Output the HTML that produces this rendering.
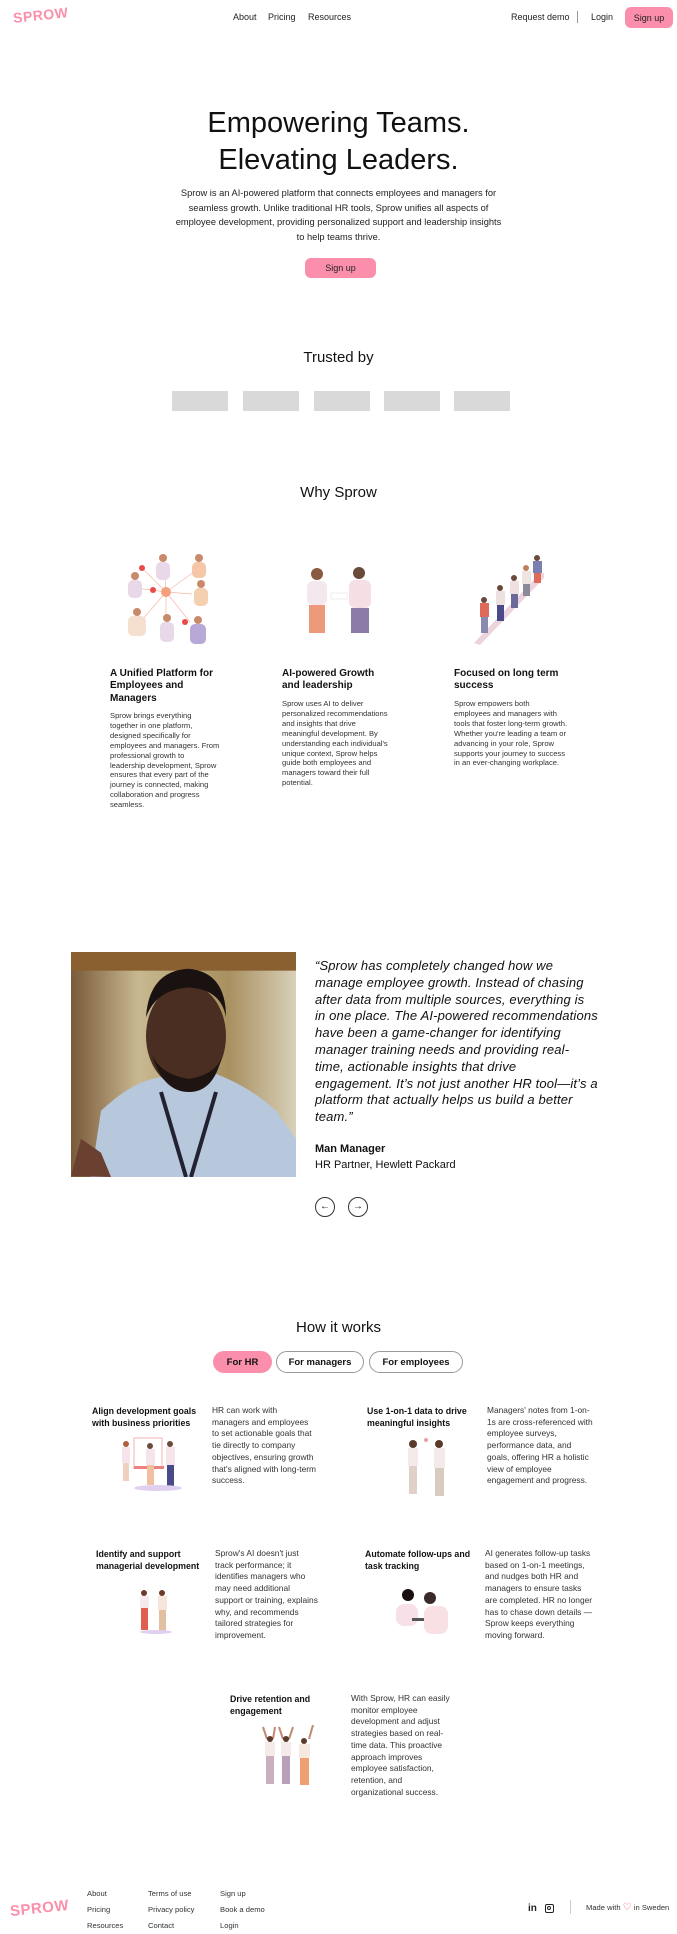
<!DOCTYPE html>
<html><head><meta charset="utf-8"><style>
*{margin:0;padding:0;box-sizing:border-box}
body{width:677px;height:1920px;position:relative;background:#fff;font-family:"Liberation Sans",Arial,sans-serif;color:#111;overflow:hidden}
.a{position:absolute}
.nav{font-size:9px;top:12px;color:#222}
.btn{background:#fb8fab;border-radius:6px;font-size:9px;display:flex;align-items:center;justify-content:center;color:#222}
.h{font-size:10px;line-height:12.3px;font-weight:bold;color:#111}
.p{font-size:7.6px;line-height:9.9px;color:#333}
.hh{font-size:8.8px;line-height:12px;font-weight:bold}
.pp{font-size:8.4px;line-height:11.7px;color:#333}
.box{background:#d9d9d9;width:56px;height:20px;top:391px}
.tab{top:1351px;height:22px;border-radius:11px;border:1px solid #999;font-size:9.5px;font-weight:bold;display:flex;align-items:center;justify-content:center}
.f{font-size:7.6px;line-height:16px;color:#333}
.logo{color:#fb8fab;font-weight:bold;letter-spacing:0.5px}
</style></head><body>
<div class="a logo" style="left:13px;top:7px;font-size:14px;transform:rotate(-6deg)">SPROW</div>
<div class="a nav" style="left:233px">About</div>
<div class="a nav" style="left:268px">Pricing</div>
<div class="a nav" style="left:308px">Resources</div>
<div class="a nav" style="left:511px">Request demo</div>
<div class="a" style="left:577px;top:11px;width:1px;height:12px;background:#999"></div>
<div class="a nav" style="left:591px">Login</div>
<div class="a btn" style="left:625px;top:7px;width:48px;height:21px">Sign up</div>

<div class="a" style="left:0;width:677px;top:105px;text-align:center;font-size:29px;line-height:37px;font-weight:500">Empowering Teams.<br>Elevating Leaders.</div>
<div class="a" style="left:172px;width:333px;top:186px;text-align:center;font-size:9.3px;line-height:14.5px;color:#222">Sprow is an AI-powered platform that connects employees and managers for seamless growth. Unlike traditional HR tools, Sprow unifies all aspects of employee development, providing personalized support and leadership insights to help teams thrive.</div>
<div class="a btn" style="left:305px;top:258px;width:71px;height:20px">Sign up</div>

<div class="a" style="left:0;width:677px;top:349px;text-align:center;font-size:15px;font-weight:500">Trusted by</div>
<div class="a box" style="left:172px"></div><div class="a box" style="left:243px"></div><div class="a box" style="left:314px"></div><div class="a box" style="left:384px"></div><div class="a box" style="left:454px"></div>

<div class="a" style="left:0;width:677px;top:484px;text-align:center;font-size:15px;font-weight:500">Why Sprow</div>

<svg class="a" style="left:120px;top:550px" width="92" height="94" viewBox="0 0 92 94">
<g stroke="#f4b9a8" stroke-width="0.7"><line x1="46" y1="42" x2="22" y2="18"/><line x1="46" y1="42" x2="44" y2="14"/><line x1="46" y1="42" x2="74" y2="22"/><line x1="46" y1="42" x2="16" y2="38"/><line x1="46" y1="42" x2="72" y2="44"/><line x1="46" y1="42" x2="22" y2="70"/><line x1="46" y1="42" x2="46" y2="72"/><line x1="46" y1="42" x2="70" y2="72"/></g>
<circle cx="46" cy="42" r="5" fill="#f5a07c"/><circle cx="22" cy="18" r="3" fill="#e84a4a"/><circle cx="33" cy="40" r="3" fill="#e84a4a"/><circle cx="65" cy="72" r="3" fill="#e84a4a"/>
<g fill="#e8d8e8"><rect x="8" y="30" width="14" height="18" rx="5"/><rect x="36" y="12" width="14" height="18" rx="5"/><rect x="72" y="12" width="14" height="16" rx="5" fill="#f5c7a8"/><rect x="74" y="38" width="14" height="18" rx="5" fill="#f5d0b0"/><rect x="8" y="66" width="18" height="20" rx="5" fill="#f5e0d0"/><rect x="40" y="72" width="14" height="20" rx="5"/><rect x="70" y="74" width="16" height="20" rx="5" fill="#b8a8d8"/></g>
<g fill="#c88a6a"><circle cx="15" cy="26" r="4"/><circle cx="43" cy="8" r="4"/><circle cx="79" cy="8" r="4"/><circle cx="81" cy="34" r="4"/><circle cx="17" cy="62" r="4"/><circle cx="47" cy="68" r="4"/><circle cx="78" cy="70" r="4"/></g>
</svg>
<svg class="a" style="left:297px;top:565px" width="84" height="68" viewBox="0 0 84 68">
<circle cx="20" cy="9" r="6" fill="#8a5a40"/><rect x="10" y="16" width="20" height="24" rx="6" fill="#f3e8ee"/><rect x="12" y="40" width="16" height="28" fill="#ee9a7a"/>
<circle cx="62" cy="8" r="6" fill="#6a4a3a"/><rect x="52" y="15" width="22" height="28" rx="6" fill="#f5dfe5"/><rect x="54" y="43" width="18" height="25" fill="#8a7aa8"/>
<rect x="34" y="28" width="16" height="6" fill="#fff" stroke="#ddd" stroke-width=".5"/>
</svg>
<svg class="a" style="left:470px;top:548px" width="78" height="97" viewBox="0 0 78 97">
<path d="M4 95 L70 25 L74 25 L74 30 L10 97Z" fill="#ecd3dc"/>
<g><circle cx="14" cy="52" r="3" fill="#6a4a3a"/><rect x="10" y="55" width="9" height="14" fill="#e06a5a"/><rect x="11" y="69" width="7" height="16" fill="#8a8ab0"/>
<circle cx="30" cy="40" r="3" fill="#6a4a3a"/><rect x="26" y="43" width="9" height="14" fill="#eee0e0"/><rect x="27" y="57" width="7" height="16" fill="#4a4a8a"/>
<circle cx="44" cy="30" r="3" fill="#6a4a3a"/><rect x="40" y="33" width="9" height="13" fill="#eee0e0"/><rect x="41" y="46" width="7" height="14" fill="#6a6a9a"/>
<circle cx="56" cy="20" r="3" fill="#c08060"/><rect x="52" y="23" width="9" height="13" fill="#f0e4e0"/><rect x="53" y="36" width="7" height="12" fill="#8a8a9a"/>
<circle cx="67" cy="10" r="3" fill="#6a4a3a"/><rect x="63" y="13" width="9" height="12" fill="#7a80b0"/><rect x="64" y="25" width="7" height="10" fill="#e06a5a"/></g>
</svg>

<div class="a h" style="left:110px;top:668px;width:110px">A Unified Platform for Employees and Managers</div>
<div class="a p" style="left:110px;top:711px;width:110px">Sprow brings everything together in one platform, designed specifically for employees and managers. From professional growth to leadership development, Sprow ensures that every part of the journey is connected, making collaboration and progress seamless.</div>
<div class="a h" style="left:282px;top:668px;width:112px">AI-powered Growth and leadership</div>
<div class="a p" style="left:282px;top:699px;width:110px">Sprow uses AI to deliver personalized recommendations and insights that drive meaningful development. By understanding each individual's unique context, Sprow helps guide both employees and managers toward their full potential.</div>
<div class="a h" style="left:454px;top:668px;width:112px">Focused on long term success</div>
<div class="a p" style="left:454px;top:699px;width:114px">Sprow empowers both employees and managers with tools that foster long-term growth. Whether you're leading a team or advancing in your role, Sprow supports your journey to success in an ever-changing workplace.</div>

<svg class="a" style="left:71px;top:952px" width="225" height="225" viewBox="0 0 225 241" preserveAspectRatio="none">
<defs><linearGradient id="bg" x1="0" x2="1"><stop offset="0" stop-color="#7a5a3a"/><stop offset=".3" stop-color="#c8b890"/><stop offset=".7" stop-color="#a89060"/><stop offset="1" stop-color="#d8d0b8"/></linearGradient></defs>
<rect width="225" height="241" fill="url(#bg)"/>
<rect x="0" y="0" width="225" height="20" fill="#8a6030"/>
<path d="M20 241 L30 170 Q60 140 85 135 L130 125 Q175 140 205 170 L225 200 L225 241Z" fill="#b8c8dc"/>
<ellipse cx="115" cy="90" rx="40" ry="56" fill="#4a2e22"/>
<path d="M75 70 Q78 20 118 18 Q155 22 155 70 Q150 40 118 38 Q85 40 75 70Z" fill="#1a1210"/>
<path d="M80 105 Q90 150 118 150 Q145 150 152 105 Q150 130 118 136 Q85 130 80 105Z" fill="#1e1512"/>
<path d="M90 150 L115 241 M145 150 L120 241" stroke="#223" stroke-width="4"/>
<path d="M0 240 L10 200 L30 215 L40 241Z" fill="#6a4030"/>
</svg>
<div class="a" style="left:315px;top:958px;font-size:13px;line-height:16.8px;font-style:italic;color:#111;letter-spacing:0.15px;white-space:nowrap">“Sprow has completely changed how we<br>manage employee growth. Instead of chasing<br>after data from multiple sources, everything is<br>in one place. The AI-powered recommendations<br>have been a game-changer for identifying<br>manager training needs and providing real-<br>time, actionable insights that drive<br>engagement. It’s not just another HR tool—it’s a<br>platform that actually helps us build a better<br>team.”</div>
<div class="a" style="left:315px;top:1142px;font-size:11px;line-height:15.5px;color:#111"><b>Man Manager</b><br>HR Partner, Hewlett Packard</div>
<div class="a" style="left:315px;top:1197px;width:20px;height:20px;border:1px solid #333;border-radius:50%;font-size:10px;text-align:center;line-height:18px">←</div>
<div class="a" style="left:348px;top:1197px;width:20px;height:20px;border:1px solid #333;border-radius:50%;font-size:10px;text-align:center;line-height:18px">→</div>

<div class="a" style="left:0;width:677px;top:1319px;text-align:center;font-size:15px;font-weight:500">How it works</div>
<div class="a tab" style="left:213px;width:59px;background:#fb8fab;border-color:#fb8fab">For HR</div>
<div class="a tab" style="left:276px;width:88px">For managers</div>
<div class="a tab" style="left:369px;width:94px">For employees</div>

<div class="a hh" style="left:92px;top:1405px;width:118px">Align development goals with business priorities</div>
<div class="a pp" style="left:212px;top:1405px;width:104px">HR can work with managers and employees to set actionable goals that tie directly to company objectives, ensuring growth that's aligned with long-term success.</div>
<svg class="a" style="left:120px;top:1436px" width="66" height="56" viewBox="0 0 66 56"><rect x="14" y="2" width="28" height="30" fill="#fff" stroke="#f0b0b0"/><rect x="14" y="30" width="30" height="3" fill="#f08080"/><circle cx="6" cy="8" r="3" fill="#b06040"/><rect x="2" y="11" width="8" height="16" fill="#f5e5ea"/><rect x="3" y="27" width="6" height="18" fill="#f0d0c0"/><circle cx="30" cy="10" r="3" fill="#6a4a3a"/><rect x="26" y="13" width="9" height="16" fill="#f5e5ea"/><rect x="27" y="29" width="7" height="20" fill="#f0c0a0"/><circle cx="50" cy="8" r="3" fill="#6a4a3a"/><rect x="46" y="11" width="9" height="18" fill="#f5e5ea"/><rect x="47" y="29" width="7" height="22" fill="#4a4a8a"/><ellipse cx="38" cy="52" rx="24" ry="3" fill="#e0d0f0"/></svg>

<div class="a hh" style="left:367px;top:1405px;width:110px">Use 1-on-1 data to drive meaningful insights</div>
<div class="a pp" style="left:487px;top:1405px;width:106px">Managers' notes from 1-on-1s are cross-referenced with employee surveys, performance data, and goals, offering HR a holistic view of employee engagement and progress.</div>
<svg class="a" style="left:399px;top:1438px" width="58" height="62" viewBox="0 0 58 62"><circle cx="14" cy="6" r="4" fill="#5a3a2a"/><rect x="9" y="10" width="10" height="18" fill="#f5eaea"/><rect x="10" y="28" width="8" height="28" fill="#e0d0c8"/><circle cx="40" cy="6" r="4" fill="#5a3a2a"/><rect x="35" y="10" width="11" height="20" fill="#f5eaea"/><rect x="36" y="30" width="9" height="28" fill="#d8ccc0"/><circle cx="27" cy="2" r="2" fill="#f0a0a0"/></svg>

<div class="a hh" style="left:96px;top:1548px;width:110px">Identify and support managerial development</div>
<div class="a pp" style="left:215px;top:1548px;width:104px">Sprow's AI doesn't just track performance; it identifies managers who may need additional support or training, explains why, and recommends tailored strategies for improvement.</div>
<svg class="a" style="left:136px;top:1589px" width="38" height="46" viewBox="0 0 38 46"><circle cx="8" cy="4" r="3" fill="#6a3a2a"/><rect x="4" y="7" width="9" height="12" fill="#f5eaf0"/><rect x="5" y="19" width="7" height="22" fill="#e06050"/><circle cx="26" cy="4" r="3" fill="#6a3a2a"/><rect x="22" y="7" width="9" height="14" fill="#f5e5da"/><rect x="23" y="21" width="7" height="22" fill="#e0c0a0"/><ellipse cx="20" cy="43" rx="16" ry="2" fill="#e0d0f0"/></svg>

<div class="a hh" style="left:365px;top:1548px;width:112px">Automate follow-ups and task tracking</div>
<div class="a pp" style="left:485px;top:1548px;width:108px">AI generates follow-up tasks based on 1-on-1 meetings, and nudges both HR and managers to ensure tasks are completed. HR no longer has to chase down details — Sprow keeps everything moving forward.</div>
<svg class="a" style="left:390px;top:1588px" width="60" height="50" viewBox="0 0 60 50"><circle cx="18" cy="7" r="6" fill="#1a1010"/><rect x="6" y="16" width="22" height="22" rx="8" fill="#f8e0e8"/><circle cx="40" cy="10" r="6" fill="#3a2a2a"/><rect x="34" y="18" width="24" height="28" rx="8" fill="#f8e0e4"/><rect x="22" y="30" width="12" height="3" fill="#555"/></svg>

<div class="a hh" style="left:230px;top:1693px;width:90px">Drive retention and engagement</div>
<div class="a pp" style="left:351px;top:1693px;width:104px">With Sprow, HR can easily monitor employee development and adjust strategies based on real-time data. This proactive approach improves employee satisfaction, retention, and organizational success.</div>
<svg class="a" style="left:259px;top:1725px" width="58" height="62" viewBox="0 0 58 62"><g stroke="#c08a70" stroke-width="2"><line x1="4" y1="2" x2="8" y2="14"/><line x1="16" y1="2" x2="14" y2="14"/><line x1="20" y1="2" x2="24" y2="14"/><line x1="34" y1="2" x2="30" y2="14"/><line x1="54" y1="0" x2="50" y2="14"/></g><circle cx="11" cy="14" r="3" fill="#5a3a2a"/><rect x="6" y="17" width="10" height="14" fill="#f5eaea"/><rect x="7" y="31" width="8" height="28" fill="#c8b0c0"/><circle cx="27" cy="14" r="3" fill="#5a3a2a"/><rect x="22" y="17" width="10" height="14" fill="#f5eaea"/><rect x="23" y="31" width="8" height="28" fill="#b8a0b8"/><circle cx="45" cy="16" r="3" fill="#5a3a2a"/><rect x="40" y="19" width="11" height="14" fill="#f5eae0"/><rect x="41" y="33" width="9" height="27" fill="#f0a070"/></svg>

<div class="a logo" style="left:10px;top:1900px;font-size:15px;transform:rotate(-6deg)">SPROW</div>
<div class="a f" style="left:87px;top:1886px">About<br>Pricing<br>Resources</div>
<div class="a f" style="left:148px;top:1886px">Terms of use<br>Privacy policy<br>Contact</div>
<div class="a f" style="left:220px;top:1886px">Sign up<br>Book a demo<br>Login</div>
<div class="a" style="left:528px;top:1903px;font-size:10px;font-weight:bold;color:#222">in</div>
<div class="a" style="left:545px;top:1904px;width:9px;height:9px;border:1.3px solid #222;border-radius:2px"><div style="width:4px;height:4px;border:1px solid #222;border-radius:50%;margin:1.2px"></div></div>
<div class="a" style="left:570px;top:1900px;width:1px;height:14px;background:#ccc"></div>
<div class="a" style="left:586px;top:1902px;font-size:7.6px;color:#333">Made with <span style="color:#e84a5a;font-size:10px">♡</span> in Sweden</div>
</body></html>
